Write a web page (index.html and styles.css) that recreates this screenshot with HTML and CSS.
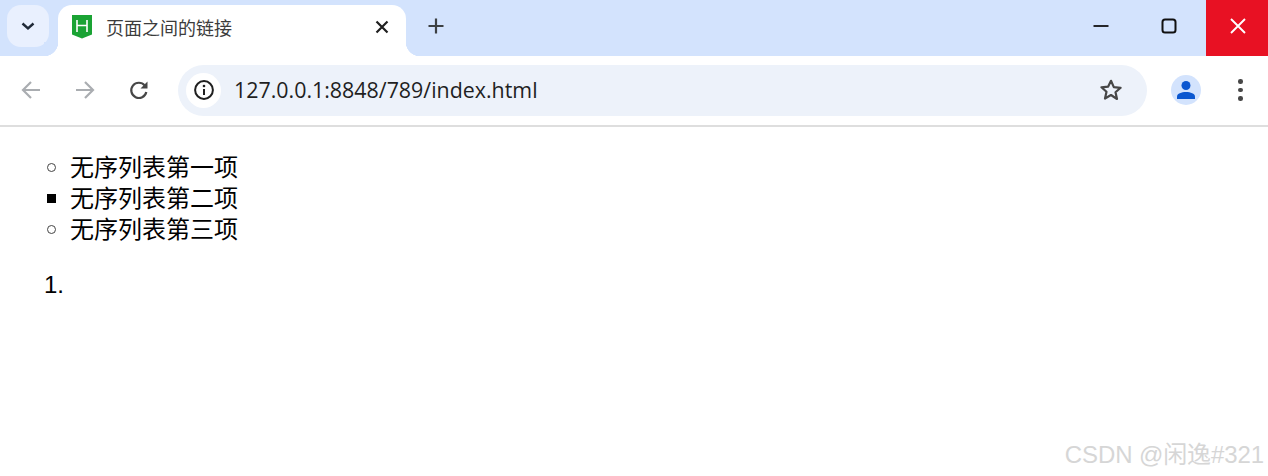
FILE: index.html
```html
<!DOCTYPE html>
<html lang="zh-CN">
<head>
  <meta charset="UTF-8">
  <title>页面之间的链接</title>
  <link rel="stylesheet" href="styles.css">
</head>
<body>
  <header class="tabstrip">
    <button class="tab-search">
      <svg width="16" height="16" viewBox="0 0 16 16"><path d="M2.5 5.5 8 10.5l5.500-5" fill="none" stroke="#1f2937" stroke-width="2.400"/></svg>
    </button>
    <div class="tab">
      <svg class="favicon" width="20" height="24" viewBox="0 0 20 24">
        <path d="M0 0h20v19.500L10 23.500 0 19.500z" fill="#1aa334"/>
        <path d="M5 5v12M15 5v12M5 10.500h10" fill="none" stroke="#fff" stroke-width="1.600"/>
      </svg>
      <span class="tab-title">页面之间的链接</span>
      <svg class="tab-close" width="14" height="14" viewBox="0 0 14 14"><path d="M1.500 1.500l11 11M12.500 1.500l-11 11" stroke="#1f1f1f" stroke-width="2.200"/></svg>
    </div>
    <svg class="new-tab" width="16" height="16" viewBox="0 0 16 16"><path d="M8 .5v15M.5 8h15" stroke="#3c4043" stroke-width="2.200"/></svg>
    <div class="window-controls">
      <div class="win-btn"><svg width="16" height="16" viewBox="0 0 16 16"><path d="M.5 8h15" stroke="#111" stroke-width="1.800"/></svg></div>
      <div class="win-btn"><svg width="16" height="16" viewBox="0 0 16 16"><rect x="1.500" y="1.500" width="13" height="13" rx="2.500" fill="none" stroke="#111" stroke-width="2"/></svg></div>
      <div class="win-btn win-close"><svg width="16" height="16" viewBox="0 0 16 16"><path d="M1 1l14 14M15 1 1 15" stroke="#fff" stroke-width="1.900"/></svg></div>
    </div>
  </header>

  <nav class="toolbar">
    <svg class="nav-icon" width="22" height="22" viewBox="0 0 22 22"><path d="M20 11H3M11 3l-8 8 8 8" fill="none" stroke="#aaadb1" stroke-width="2.200"/></svg>
    <svg class="nav-icon" width="22" height="22" viewBox="0 0 22 22"><path d="M2 11h17M11 3l8 8-8 8" fill="none" stroke="#aaadb1" stroke-width="2.200"/></svg>
    <svg class="nav-icon" width="22" height="22" viewBox="0 0 22 22"><path d="M18.300 13a7.600 7.600 0 1 1-1.500-6.400" fill="none" stroke="#474747" stroke-width="2.200"/><path d="M19.500 2.500v7h-7z" fill="#474747"/></svg>
    <div class="omnibox">
      <span class="site-info">
        <svg width="22" height="22" viewBox="0 0 22 22"><circle cx="11" cy="11" r="8.900" fill="none" stroke="#1f1f1f" stroke-width="2"/><path d="M11 10v6" stroke="#1f1f1f" stroke-width="2"/><circle cx="11" cy="7" r="1.300" fill="#1f1f1f"/></svg>
      </span>
      <span class="url">127.0.0.1:8848/789/index.html</span>
      <svg class="star" width="24" height="24" viewBox="0 0 24 24"><path d="M12 2.800l2.800 6.300 6.800.7-5.100 4.500 1.500 6.700L12 17l-6 3.500 1.500-6.700-5.100-4.500 6.800-.7z" fill="none" stroke="#474747" stroke-width="2.200" stroke-linejoin="round"/></svg>
    </div>
    <div class="avatar">
      <svg width="20" height="20" viewBox="0 0 20 20"><circle cx="10" cy="5.500" r="4.500" fill="#0b57d0"/><path d="M1 19v-2.500C1 13.500 5.500 12 10 12s9 1.500 9 4.500V19z" fill="#0b57d0"/></svg>
    </div>
    <div class="menu-dots"><i></i><i></i><i></i></div>
  </nav>

  <main class="content">
    <ul class="list-circle">
      <li class="item">无序列表第一项</li>
      <li class="item item-square">无序列表第二项</li>
      <li class="item">无序列表第三项</li>
    </ul>
    <ol class="list-num">
      <li></li>
    </ol>
  </main>

  <div class="watermark">CSDN @闲逸#321</div>
</body>
</html>
```

FILE: styles.css
```css
* {
  box-sizing: border-box;
}
html, body {
  height: 100%;
}
body {
  margin: 0;
  background: #fff;
  color: #000;
  font-family: "Open Sans", "Noto Sans CJK SC", sans-serif;
  overflow: hidden;
}
svg {
  display: block;
  flex: none;
}

.tabstrip {
  display: flex;
  align-items: flex-start;
  height: 56px;
  padding-top: 5px;
  background: #d3e3fd;
}
.tab-search {
  display: flex;
  align-items: center;
  justify-content: center;
  width: 42px;
  height: 42px;
  margin-left: 7px;
  padding: 0;
  border: 0;
  border-radius: 14px;
  background: #e9f0fe;
}
.tab {
  position: relative;
  display: flex;
  align-items: center;
  width: 348px;
  height: 51px;
  margin-left: 9px;
  padding: 0 17px 7px 14px;
  border-radius: 14px 14px 0 0;
  background: #fff;
}
.tab::before,
.tab::after {
  content: "";
  position: absolute;
  bottom: 0;
  width: 14px;
  height: 14px;
}
.tab::before {
  left: -14px;
  background: radial-gradient(circle at 0 0, #d3e3fd 14px, #fff 14.500px);
}
.tab::after {
  right: -14px;
  background: radial-gradient(circle at 100% 0, #d3e3fd 14px, #fff 14.500px);
}
.tab-title {
  margin-left: 14px;
  flex: 1;
  font-size: 18px;
  color: #3c3c3c;
  font-family: "Noto Sans CJK SC", sans-serif;
}
.new-tab {
  margin: 13px 0 0 22px;
}
.window-controls {
  display: flex;
  margin-left: auto;
  margin-top: -5px;
}
.win-btn {
  display: flex;
  align-items: center;
  justify-content: center;
  width: 68px;
  height: 56px;
  padding: 0 6px 4px 0;
}
.win-close {
  width: 62px;
  padding: 0 0 4px 2px;
  background: #e81123;
}

.toolbar {
  display: flex;
  align-items: center;
  height: 71px;
  padding: 0 0 1px 20px;
  border-bottom: 2px solid #dedede;
  border-radius: 14px 14px 0 0;
  background: #fff;
  position: relative;
}
.nav-icon {
  margin-right: 32px;
}
.nav-icon + .omnibox {
  margin-left: -4px;
}
.omnibox {
  display: flex;
  align-items: center;
  width: 969px;
  height: 51px;
  padding: 0 24px 0 8px;
  border-radius: 26px;
  background: #edf2fa;
}
.site-info {
  display: flex;
  align-items: center;
  justify-content: center;
  width: 35px;
  height: 35px;
  border-radius: 50%;
  background: #fff;
}
.url {
  flex: 1;
  margin-left: 13px;
  padding-bottom: 2px;
  font-size: 21.400px;
  color: #1f1f1f;
}
.avatar {
  display: flex;
  align-items: center;
  justify-content: center;
  width: 30px;
  height: 30px;
  margin-left: 24px;
  border-radius: 50%;
  background: #d3e3fd;
}
.menu-dots {
  display: flex;
  flex-direction: column;
  gap: 4px;
  margin-left: 37px;
}
.menu-dots i {
  display: block;
  width: 4.500px;
  height: 4.500px;
  border-radius: 50%;
  background: #474747;
}

.content {
  padding-top: 25px;
  font-family: "Liberation Sans", "Noto Sans CJK SC", sans-serif;
  font-size: 24px;
  line-height: 31px;
}
.list-circle {
  margin: 0 0 24px;
  padding-left: 47px;
  list-style: none;
}
.item {
  display: flex;
  align-items: center;
  gap: 14px;
}
.item::before {
  content: "";
  box-sizing: border-box;
  width: 9px;
  height: 9px;
  border: 1.500px solid #444;
  border-radius: 50%;
}
.item-square::before {
  border: 0;
  border-radius: 0;
  background: #000;
}
.list-num {
  margin: 0;
  padding-left: 44px;
  list-style-position: inside;
}

.watermark {
  position: absolute;
  right: 4px;
  bottom: 6px;
  font-family: "Liberation Sans", "Noto Sans CJK SC", sans-serif;
  font-size: 24px;
  letter-spacing: -0.100px;
  color: #d6d6d6;
  white-space: nowrap;
}
```
